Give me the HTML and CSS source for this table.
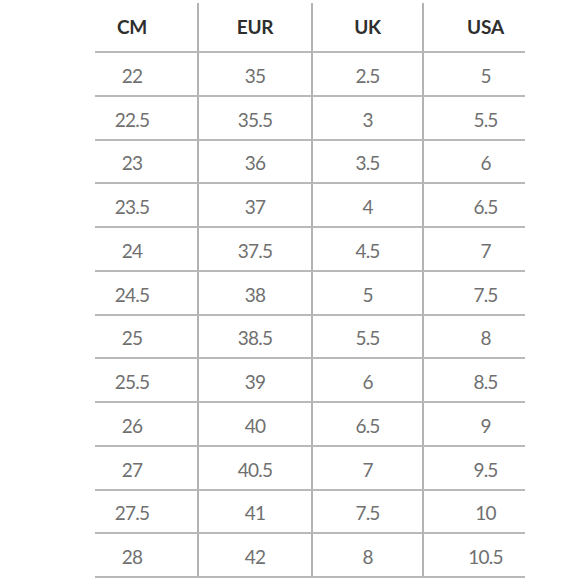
FILE: index.html
```html
<!DOCTYPE html>
<html>
<head>
<meta charset="utf-8">
<link rel="stylesheet" href="styles.css">
</head>
<body>
<div class="chart">
  <div class="cell head c1">CM</div><div class="cell head c2">EUR</div><div class="cell head c3">UK</div><div class="cell head c4">USA</div>
  <div class="cell c1">22</div><div class="cell c2">35</div><div class="cell c3">2.5</div><div class="cell c4">5</div>
  <div class="cell c1">22.5</div><div class="cell c2">35.5</div><div class="cell c3">3</div><div class="cell c4">5.5</div>
  <div class="cell c1">23</div><div class="cell c2">36</div><div class="cell c3">3.5</div><div class="cell c4">6</div>
  <div class="cell c1">23.5</div><div class="cell c2">37</div><div class="cell c3">4</div><div class="cell c4">6.5</div>
  <div class="cell c1">24</div><div class="cell c2">37.5</div><div class="cell c3">4.5</div><div class="cell c4">7</div>
  <div class="cell c1">24.5</div><div class="cell c2">38</div><div class="cell c3">5</div><div class="cell c4">7.5</div>
  <div class="cell c1">25</div><div class="cell c2">38.5</div><div class="cell c3">5.5</div><div class="cell c4">8</div>
  <div class="cell c1">25.5</div><div class="cell c2">39</div><div class="cell c3">6</div><div class="cell c4">8.5</div>
  <div class="cell c1">26</div><div class="cell c2">40</div><div class="cell c3">6.5</div><div class="cell c4">9</div>
  <div class="cell c1">27</div><div class="cell c2">40.5</div><div class="cell c3">7</div><div class="cell c4">9.5</div>
  <div class="cell c1">27.5</div><div class="cell c2">41</div><div class="cell c3">7.5</div><div class="cell c4">10</div>
  <div class="cell c1">28</div><div class="cell c2">42</div><div class="cell c3">8</div><div class="cell c4">10.5</div>
</div>
</body>
</html>
```
FILE: styles.css
```css
html, body {
  margin: 0;
  padding: 0;
  background: #ffffff;
  overflow: hidden;
}
body {
  width: 580px;
  height: 579px;
  font-family: "Lato", "Open Sans", sans-serif;
}
.chart {
  display: grid;
  grid-template-columns: 102px 114px 111px 103px;
  grid-template-rows: 50px repeat(12, 43.75px) 10px;
  margin-left: 95px;
  padding-top: 3px;
  width: 430px;
}
.cell {
  box-sizing: border-box;
  display: flex;
  align-items: center;
  justify-content: center;
  border-bottom: 2px solid #b9b9b9;
  font-size: 19px;
  color: #707070;
  letter-spacing: -0.8px;
  padding-top: 3px;
}
.head {
  font-weight: 700;
  color: #2e2e2e;
  letter-spacing: -0.2px;
  padding-top: 0;
  padding-bottom: 2px;
}
.c1 {
  padding-right: 28px;
}
.c2, .c3, .c4 {
  border-left: 2px solid #b3b3b3;
}
.c4 {
  padding-left: 22px;
}
```
